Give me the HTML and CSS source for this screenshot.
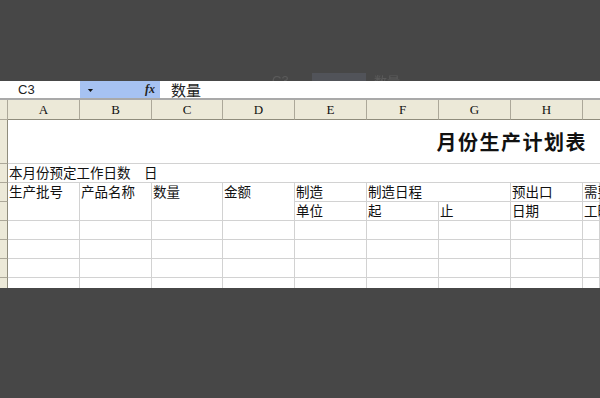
FILE: index.html
```html
<!DOCTYPE html>
<html lang="zh-CN">
<head>
    <meta charset="UTF-8">
    <title>月份生产计划表</title>
    <link rel="stylesheet" href="styles.css">
</head>
<body>

    <div class="ghost">
        <span class="ghost-name">C3</span>
        <span class="ghost-blue"></span>
        <span class="ghost-text">数量</span>
    </div>

    <div class="top-space"></div>

    <div class="formula-bar">
        <div class="name-box">C3</div>
        <div class="name-tools">
            <span class="drop">▼</span>
            <span class="fx">fx</span>
        </div>
        <div class="formula-text">数量</div>
    </div>

    <div class="sheet">
        <!-- column headers -->
        <div class="corner"></div>
        <div class="col-hdr">A</div>
        <div class="col-hdr">B</div>
        <div class="col-hdr">C</div>
        <div class="col-hdr">D</div>
        <div class="col-hdr">E</div>
        <div class="col-hdr">F</div>
        <div class="col-hdr">G</div>
        <div class="col-hdr">H</div>
        <div class="col-hdr last"></div>

        <!-- row 1 -->
        <div class="row-hdr"></div>
        <div class="cell title-cell">月份生产计划表</div>

        <!-- row 2 -->
        <div class="row-hdr"></div>
        <div class="cell wide-cell">本月份预定工作日数　日</div>

        <!-- row 3 + 4 -->
        <div class="row-hdr"></div>
        <div class="cell tall">生产批号</div>
        <div class="cell tall">产品名称</div>
        <div class="cell tall">数量</div>
        <div class="cell tall">金额</div>
        <div class="cell">制造</div>
        <div class="cell span2">制造日程</div>
        <div class="cell">预出口</div>
        <div class="cell">需要</div>

        <div class="row-hdr"></div>
        <div class="cell">单位</div>
        <div class="cell">起</div>
        <div class="cell">止</div>
        <div class="cell">日期</div>
        <div class="cell">工时</div>
    </div>

    <script>
        // empty rows under the header block
        const sheet = document.querySelector('.sheet');
        for (let r = 0; r < 4; r++) {
            const hdr = document.createElement('div');
            hdr.className = 'row-hdr';
            sheet.appendChild(hdr);
            for (let c = 0; c < 9; c++) {
                const cell = document.createElement('div');
                cell.className = 'cell';
                sheet.appendChild(cell);
            }
        }
    </script>

</body>
</html>
```

FILE: styles.css
```css
body {
    margin: 0;
    background: #474747;
    font-family: "Liberation Sans", "Noto Sans CJK SC", sans-serif;
    color: #000;
    height: 398px;
    overflow: hidden;
    position: relative;
}
.top-space {
    height: 81px;
}
.ghost {
    position: absolute;
    top: 73px;
    left: 262px;
    height: 8px;
    width: 140px;
    overflow: hidden;
    opacity: 0.1;
    display: flex;
    align-items: flex-start;
    color: #fff;
    font-size: 13px;
    line-height: 16px;
    filter: blur(0.6px);
}
.ghost-name {
    margin-left: 10px;
    width: 40px;
}
.ghost-blue {
    width: 54px;
    height: 16px;
    background: #a6c2f2;
}
.ghost-text {
    margin-left: 8px;
    font-family: "Noto Sans CJK SC", sans-serif;
}
.formula-bar {
    display: flex;
    height: 17px;
    background: #fff;
    border-bottom: 2px solid #a9a9a9;
}
.name-box {
    width: 80px;
    box-sizing: border-box;
    padding-left: 18px;
    font-size: 13px;
    line-height: 17px;
    color: #222;
}
.name-tools {
    width: 80px;
    background: #a6c2f2;
    display: flex;
    justify-content: space-between;
    align-items: center;
    box-sizing: border-box;
    padding: 0 5px 0 6px;
}
.drop {
    font-size: 9px;
    transform: scaleY(0.6);
    color: #111;
}
.fx {
    font-family: "Liberation Serif", serif;
    font-style: italic;
    font-weight: bold;
    font-size: 12px;
    color: #222;
}
.formula-text {
    padding-left: 11px;
    font-family: "Noto Sans CJK SC", sans-serif;
    font-size: 15px;
    line-height: 17px;
    color: #222;
}
.sheet {
    display: grid;
    grid-template-columns: 8px 72px 72px 71px 72px 72px 72px 72px 72px minmax(0, 1fr);
    grid-template-rows: 20px 44px 19px 19px 19px 19px 19px 19px 19px;
    height: 188px;
    overflow: hidden;
    background: #fff;
}
.corner, .col-hdr, .row-hdr {
    background: #ece9d8;
    box-sizing: border-box;
}
.corner {
    border-right: 1px solid #aca899;
    border-bottom: 1px solid #aca899;
}
.col-hdr {
    border-right: 1px solid #aca899;
    border-bottom: 1px solid #8f8c7c;
    font-family: "Liberation Serif", serif;
    font-size: 13px;
    line-height: 19px;
    text-align: center;
    color: #111;
}
.col-hdr.last {
    border-right: none;
}
.row-hdr {
    border-right: 1px solid #8f8c7c;
    border-bottom: 1px solid #aca899;
}
.cell {
    min-width: 0;
    box-sizing: border-box;
    border-right: 1px solid #d2d2d2;
    border-bottom: 1px solid #d2d2d2;
    font-family: "Noto Sans CJK SC", sans-serif;
    font-size: 13.5px;
    line-height: 17px;
    padding-left: 1px;
    white-space: nowrap;
    color: #111;
}
.title-cell {
    grid-column: 2 / 11;
    display: flex;
    justify-content: flex-end;
    align-items: center;
    padding-right: 13px;
    font-size: 20px;
    font-weight: bold;
    letter-spacing: 1.5px;
    border-right: none;
}
.wide-cell {
    grid-column: 2 / 11;
    border-right: none;
}
.tall {
    grid-row: span 2;
}
.span2 {
    grid-column: span 2;
}
```
